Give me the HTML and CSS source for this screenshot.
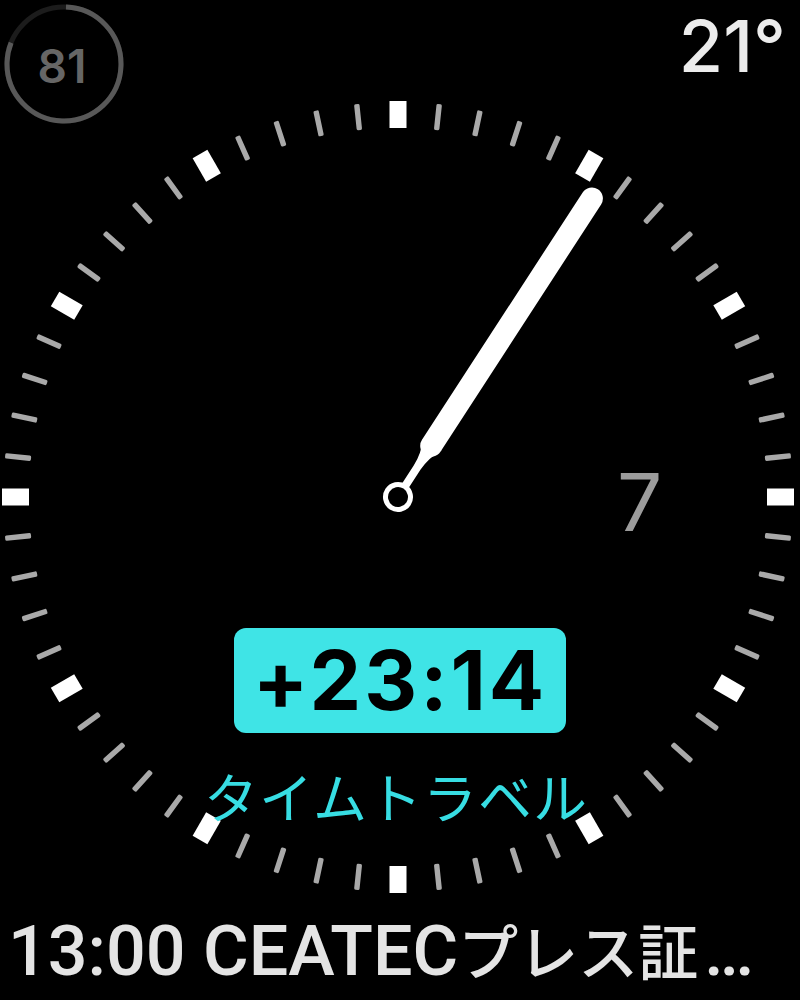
FILE: index.html
```html
<!DOCTYPE html>
<html lang="ja">
<head>
<meta charset="utf-8">
<title>Watch face</title>
<link rel="stylesheet" href="styles.css">
</head>
<body>
<div class="face">
  <svg class="dial" width="800" height="1000" viewBox="0 0 800 1000" xmlns="http://www.w3.org/2000/svg">
    <defs>
      <rect id="h" x="389.5" y="101" width="17" height="27" fill="#ffffff"/>
      <rect id="m" x="395.3" y="102" width="5.4" height="26" rx="1.5" fill="#a9a9a9"/>
    </defs>
    <use href="#h"/>
    <use href="#m" transform="rotate(6 398 497)"/>
    <use href="#m" transform="rotate(12 398 497)"/>
    <use href="#m" transform="rotate(18 398 497)"/>
    <use href="#m" transform="rotate(24 398 497)"/>
    <use href="#h" transform="rotate(30 398 497)"/>
    <use href="#m" transform="rotate(36 398 497)"/>
    <use href="#m" transform="rotate(42 398 497)"/>
    <use href="#m" transform="rotate(48 398 497)"/>
    <use href="#m" transform="rotate(54 398 497)"/>
    <use href="#h" transform="rotate(60 398 497)"/>
    <use href="#m" transform="rotate(66 398 497)"/>
    <use href="#m" transform="rotate(72 398 497)"/>
    <use href="#m" transform="rotate(78 398 497)"/>
    <use href="#m" transform="rotate(84 398 497)"/>
    <use href="#h" transform="rotate(90 398 497)"/>
    <use href="#m" transform="rotate(96 398 497)"/>
    <use href="#m" transform="rotate(102 398 497)"/>
    <use href="#m" transform="rotate(108 398 497)"/>
    <use href="#m" transform="rotate(114 398 497)"/>
    <use href="#h" transform="rotate(120 398 497)"/>
    <use href="#m" transform="rotate(126 398 497)"/>
    <use href="#m" transform="rotate(132 398 497)"/>
    <use href="#m" transform="rotate(138 398 497)"/>
    <use href="#m" transform="rotate(144 398 497)"/>
    <use href="#h" transform="rotate(150 398 497)"/>
    <use href="#m" transform="rotate(156 398 497)"/>
    <use href="#m" transform="rotate(162 398 497)"/>
    <use href="#m" transform="rotate(168 398 497)"/>
    <use href="#m" transform="rotate(174 398 497)"/>
    <use href="#h" transform="rotate(180 398 497)"/>
    <use href="#m" transform="rotate(186 398 497)"/>
    <use href="#m" transform="rotate(192 398 497)"/>
    <use href="#m" transform="rotate(198 398 497)"/>
    <use href="#m" transform="rotate(204 398 497)"/>
    <use href="#h" transform="rotate(210 398 497)"/>
    <use href="#m" transform="rotate(216 398 497)"/>
    <use href="#m" transform="rotate(222 398 497)"/>
    <use href="#m" transform="rotate(228 398 497)"/>
    <use href="#m" transform="rotate(234 398 497)"/>
    <use href="#h" transform="rotate(240 398 497)"/>
    <use href="#m" transform="rotate(246 398 497)"/>
    <use href="#m" transform="rotate(252 398 497)"/>
    <use href="#m" transform="rotate(258 398 497)"/>
    <use href="#m" transform="rotate(264 398 497)"/>
    <use href="#h" transform="rotate(270 398 497)"/>
    <use href="#m" transform="rotate(276 398 497)"/>
    <use href="#m" transform="rotate(282 398 497)"/>
    <use href="#m" transform="rotate(288 398 497)"/>
    <use href="#m" transform="rotate(294 398 497)"/>
    <use href="#h" transform="rotate(300 398 497)"/>
    <use href="#m" transform="rotate(306 398 497)"/>
    <use href="#m" transform="rotate(312 398 497)"/>
    <use href="#m" transform="rotate(318 398 497)"/>
    <use href="#m" transform="rotate(324 398 497)"/>
    <use href="#h" transform="rotate(330 398 497)"/>
    <use href="#m" transform="rotate(336 398 497)"/>
    <use href="#m" transform="rotate(342 398 497)"/>
    <use href="#m" transform="rotate(348 398 497)"/>
    <use href="#m" transform="rotate(354 398 497)"/>
    <g transform="rotate(33 398 497)">
      <circle cx="398" cy="497" r="12.5" fill="none" stroke="#ffffff" stroke-width="5"/>
      <path d="M394 484 L394 462 Q394 448 387 434 L409 434 Q402 448 402 462 L402 484 Z" fill="#ffffff"/>
      <line x1="398" y1="436" x2="398" y2="141" stroke="#ffffff" stroke-width="22" stroke-linecap="round"/>
    </g>
  </svg>

  <div class="top">
    <div class="battery">
      <svg class="ring" width="120" height="120" viewBox="0 0 120 120" xmlns="http://www.w3.org/2000/svg">
        <circle cx="60" cy="60" r="57" fill="none" stroke="#1c1c1c" stroke-width="5"/>
        <circle cx="60" cy="60" r="57" fill="none" stroke="#585858" stroke-width="5" stroke-dasharray="288 400" transform="rotate(-88 60 60)"/>
      </svg>
      <span class="battery-num">81</span>
    </div>
    <div class="temp">21°</div>
  </div>

  <div class="date">7</div>

  <div class="travel">
    <div class="badge">+23:14</div>
    <div class="label">タイムトラベル</div>
  </div>

  <div class="event">13:00 CEATEC<span class="event-jp">プレス証</span><span class="event-more">...</span></div>
</div>
</body>
</html>
```

FILE: styles.css
```css
html, body {
  margin: 0;
  padding: 0;
  background: #000;
}

.face {
  position: relative;
  width: 800px;
  height: 1000px;
  background: #000;
  overflow: hidden;
  display: flex;
  flex-direction: column;
  font-family: Inter, "Noto Sans CJK JP", sans-serif;
}

.dial {
  position: absolute;
  left: 0;
  top: 0;
}

.top {
  position: relative;
  display: flex;
  justify-content: space-between;
  align-items: flex-start;
  height: 125px;
  padding: 4px 0 0 4px;
  box-sizing: border-box;
}

.battery {
  position: relative;
  width: 120px;
  height: 120px;
  display: flex;
  align-items: center;
  justify-content: center;
}

.ring {
  position: absolute;
  left: 0;
  top: 0;
}

.battery-num {
  position: relative;
  color: #666;
  font-size: 46px;
  font-weight: 600;
  line-height: 1;
  margin-top: 4px;
  margin-left: -4px;
}

.temp {
  color: #ececec;
  font-size: 72px;
  font-weight: 500;
  line-height: 72px;
  margin-top: 6px;
  margin-right: 14px;
}

.date {
  position: absolute;
  left: 617px;
  top: 462px;
  color: #9c9c9c;
  font-size: 80px;
  font-weight: 400;
  line-height: 80px;
}

.travel {
  position: relative;
  display: flex;
  flex-direction: column;
  align-items: center;
  margin-top: 503px;
}

.badge {
  width: 332px;
  height: 105px;
  border-radius: 12px;
  background: #3fe4e6;
  color: #000;
  font-size: 82px;
  font-weight: 700;
  line-height: 105px;
  text-align: center;
  letter-spacing: 3px;
}

.label {
  margin-top: 32px;
  margin-left: -8px;
  color: #37dde3;
  font-family: "Noto Sans CJK JP", sans-serif;
  font-size: 54px;
  line-height: 62px;
  letter-spacing: 1px;
}

.event {
  position: relative;
  margin-top: 82px;
  padding-left: 8px;
  color: #e4e4e4;
  font-family: Roboto, "Noto Sans CJK JP", sans-serif;
  font-size: 70px;
  font-weight: 500;
  line-height: 80px;
  white-space: nowrap;
}

.event-jp {
  font-family: "Noto Sans CJK JP", sans-serif;
  font-size: 60px;
}

.event-more {
  margin-left: 6px;
  letter-spacing: -4px;
}
```
